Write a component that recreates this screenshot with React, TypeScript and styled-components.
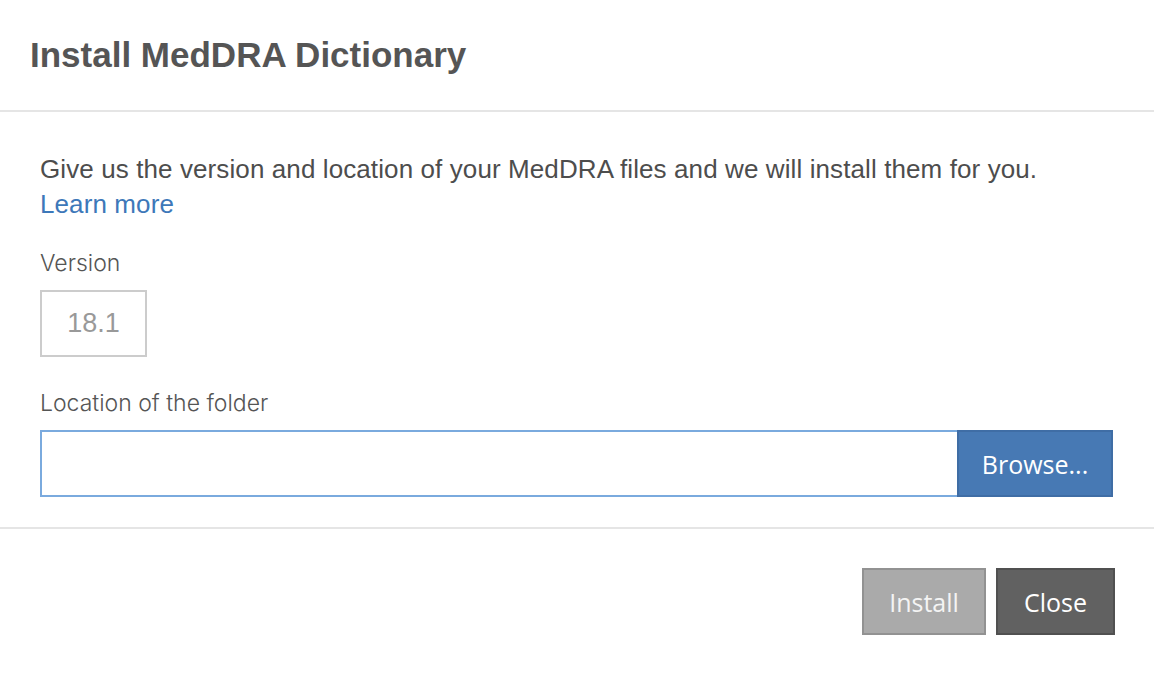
import styled, { createGlobalStyle } from "styled-components";

const GlobalStyle = createGlobalStyle`
  html, body {
    margin: 0;
    padding: 0;
    background: #ffffff;
  }
  body {
    font-family: "Liberation Sans", Arial, sans-serif;
    color: #555;
  }
`;

const Dialog = styled.div`
  width: 1154px;
  height: 674px;
  display: flex;
  flex-direction: column;
  background: #fff;
`;

const Header = styled.div`
  height: 112px;
  box-sizing: border-box;
  padding: 0 30px;
  display: flex;
  align-items: center;
  border-bottom: 2px solid #e5e5e5;
`;

const Title = styled.h1`
  margin: 0;
  font-size: 35px;
  font-weight: 700;
  color: #555;
  line-height: 40px;
`;

const Body = styled.div`
  padding: 40px 41px 30px 40px;
  display: flex;
  flex-direction: column;
  border-bottom: 2px solid #e5e5e5;
`;

const Intro = styled.p`
  margin: 0;
  font-size: 26px;
  line-height: 35px;
  letter-spacing: 0.1px;
  color: #4d4d4d;
`;

const LearnMore = styled.a`
  color: #3d78b9;
  text-decoration: none;
  cursor: pointer;
`;

const Label = styled.label<{ $top: number }>`
  display: block;
  font-family: "Inter", "Liberation Sans", sans-serif;
  font-weight: 300;
  font-size: 23px;
  line-height: 34px;
  color: #555;
  margin: ${(p) => p.$top}px 0 10px;
`;

const VersionBox = styled.div`
  width: 107px;
  height: 67px;
  box-sizing: border-box;
  border: 2px solid #cccccc;
  display: flex;
  align-items: center;
  justify-content: center;
  font-size: 27px;
  color: #999;
`;

const InputRow = styled.div`
  display: flex;
  height: 67px;
`;

const PathInput = styled.input`
  flex: 1;
  min-width: 0;
  box-sizing: border-box;
  height: 67px;
  border: 2px solid #7aaade;
  border-right: none;
  outline: none;
  padding: 0 14px;
  font-size: 26px;
  font-family: "Liberation Sans", Arial, sans-serif;
  color: #555;
`;

const Button = styled.button<{ $bg: string; $border: string; $color?: string; $width: number }>`
  width: ${(p) => p.$width}px;
  height: 67px;
  box-sizing: border-box;
  background: ${(p) => p.$bg};
  border: 2px solid ${(p) => p.$border};
  color: ${(p) => p.$color ?? "#fff"};
  font-family: "Open Sans", "Noto Sans", sans-serif;
  font-size: 25px;
  padding: 0;
  cursor: pointer;
`;

const Footer = styled.div`
  display: flex;
  justify-content: flex-end;
  gap: 10px;
  padding: 39px 39px 0 0;
`;

export default function App() {
  return (
    <>
      <GlobalStyle />
      <Dialog>
        <Header>
          <Title>Install MedDRA Dictionary</Title>
        </Header>
        <Body>
          <Intro>
            Give us the version and location of your MedDRA files and we will install them for you.
            <br />
            <LearnMore>Learn more</LearnMore>
          </Intro>
          <Label $top={24}>Version</Label>
          <VersionBox>18.1</VersionBox>
          <Label $top={29}>Location of the folder</Label>
          <InputRow>
            <PathInput type="text" />
            <Button $bg="#4779b4" $border="#3f6da5" $width={156}>
              Browse...
            </Button>
          </InputRow>
        </Body>
        <Footer>
          <Button $bg="#aaaaaa" $border="#929292" $color="#f4f4f4" $width={124}>
            Install
          </Button>
          <Button $bg="#616161" $border="#505050" $width={119}>
            Close
          </Button>
        </Footer>
      </Dialog>
    </>
  );
}
